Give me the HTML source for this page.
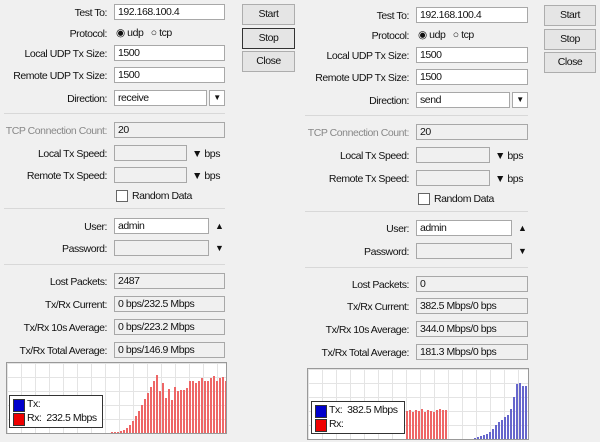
<!DOCTYPE html>
<html><head><meta charset="utf-8"><style>
body{margin:0;width:600px;height:442px;background:#f0f0f0;position:relative;overflow:hidden;font-family:"Liberation Sans",sans-serif;font-size:10.5px;letter-spacing:-0.45px;color:#111}
.a{position:absolute}
.l{position:absolute;text-align:right;white-space:nowrap;line-height:14px}
.f{position:absolute;height:16px;border:1px solid #a8a8a8;background:#fff;box-sizing:border-box;padding-left:3px;line-height:14px;white-space:nowrap}
.ro{background:#f0f0f0}
.btn{position:absolute;border:1px solid #adadad;background:#e5e5e5;box-sizing:border-box;text-align:center;line-height:19px}
.sep{position:absolute;height:1px;background:#d8d8d8}
.g{position:absolute;background:#fff;border:1px solid #999;overflow:hidden;box-sizing:border-box}
.dd{position:absolute;width:16px;height:16px;border:1px solid #a8a8a8;box-sizing:border-box;background:#fff;text-align:center;font-size:8px;line-height:14px}
</style></head><body>
<div id="root"></div>
<script>
var h='';
function L(x,y,t,c){h+='<div class="l" style="right:'+(600-x)+'px;top:'+(y-6)+'px;'+(c?'color:'+c:'')+'">'+t+'</div>';}
function F(x,y,w,t,ro){h+='<div class="f'+(ro?' ro':'')+'" style="left:'+x+'px;top:'+(y-8)+'px;width:'+w+'px">'+(t||'')+'</div>';}
function T(x,y,t,s){h+='<div class="a" style="left:'+x+'px;top:'+(y-7)+'px;line-height:14px;'+(s||'')+'">'+t+'</div>';}
function panel(o,rows,lx,ix,iw,vals,dir,btn){
 var r=rows;
 L(lx,r[0],'Test To:');F(ix,r[0],iw,'192.168.100.4');
 L(lx,r[1],'Protocol:');T(ix+2,r[1],'&#9673; udp &nbsp; &#9675; tcp');
 L(lx,r[2],'Local UDP Tx Size:');F(ix,r[2],iw,'1500');
 L(lx,r[3],'Remote UDP Tx Size:');F(ix,r[3],iw,'1500');
 L(lx,r[4],'Direction:');F(ix,r[4],iw-18,dir);h+='<div class="dd" style="left:'+(ix+iw-16)+'px;top:'+(r[4]-8)+'px">&#9660;</div>';
 h+='<div class="sep" style="left:'+(o+4)+'px;width:'+(ix+iw-o-4)+'px;top:'+(r[4]+15)+'px"></div>';
 L(lx,r[5],'TCP Connection Count:','#888');F(ix,r[5],iw,'20',1);
 L(lx,r[6],'Local Tx Speed:');F(ix,r[6],iw-38,'',1);T(ix+iw-33,r[6]+1,'&#9660; bps');
 L(lx,r[7],'Remote Tx Speed:');F(ix,r[7],iw-38,'',1);T(ix+iw-33,r[7]+1,'&#9660; bps');
 h+='<div class="a" style="left:'+(ix+2)+'px;top:'+(r[8]-6)+'px;width:10px;height:10px;border:1px solid #666;background:#fff"></div>';T(ix+18,r[8],'Random Data');
 h+='<div class="sep" style="left:'+(o+4)+'px;width:'+(ix+iw-o-4)+'px;top:'+(r[8]+12)+'px"></div>';
 L(lx,r[9],'User:');F(ix,r[9],iw-16,'admin');T(ix+iw-10,r[9],'&#9650;','font-size:9px');
 L(lx,r[10],'Password:');F(ix,r[10],iw-16,'',1);T(ix+iw-10,r[10],'&#9660;','font-size:9px');
 h+='<div class="sep" style="left:'+(o+4)+'px;width:'+(ix+iw-o-4)+'px;top:'+(r[10]+16)+'px"></div>';
 L(lx,r[11],'Lost Packets:');F(ix,r[11],iw,vals[0],1);
 L(lx,r[12],'Tx/Rx Current:');F(ix,r[12],iw,vals[1],1);
 L(lx,r[13],'Tx/Rx 10s Average:');F(ix,r[13],iw,vals[2],1);
 L(lx,r[14],'Tx/Rx Total Average:');F(ix,r[14],iw,vals[3],1);
 var b=btn;['Start','Stop','Close'].forEach(function(t,i){h+='<div class="btn" style="left:'+b[0]+'px;top:'+b[1][i]+'px;width:'+b[2]+'px;height:21px;'+(i==1&&o==0?'border:1px solid #333':'')+'">'+t+'</div>';});
}
panel(0,[12,33,53,75,98,130,153,175,196,226,248,281,304,327,350],107,114,111,['2487','0 bps/232.5 Mbps','0 bps/223.2 Mbps','0 bps/146.9 Mbps'],'receive',[242,[4,28,51],53]);
panel(301,[15,35,55,77,100,132,155,178,199,228,251,284,306,329,352],409,416,112,['0','382.5 Mbps/0 bps','344.0 Mbps/0 bps','181.3 Mbps/0 bps'],'send',[544,[5,29,52],52]);
function graph(x,y,w,hh,bars,legend){
 var s='<div class="g" style="left:'+x+'px;top:'+y+'px;width:'+w+'px;height:'+hh+'px;background-color:#fff;background-image:linear-gradient(#e4e4e4 1px,transparent 1px),linear-gradient(90deg,#e4e4e4 1px,transparent 1px);background-size:14px 14px">';
 bars.forEach(function(b){s+='<div class="a" style="left:'+b[0]+'px;bottom:0;width:2px;height:'+b[1]+'px;background:'+b[2]+'"></div>';});
 s+='<div class="a" style="left:'+legend[0]+'px;top:'+legend[1]+'px;width:92px;height:31px;border:1px solid #333;background:#fff;font-size:10.5px">'+
 '<div class="a" style="left:3px;top:3px;width:10px;height:11px;background:#00c;border:1px solid #333"></div><div class="a" style="left:17px;top:2px">'+legend[2]+'</div>'+
 '<div class="a" style="left:3px;top:17px;width:10px;height:11px;background:#e00;border:1px solid #333"></div><div class="a" style="left:17px;top:16px">'+legend[3]+'</div></div>';
 h+=s+'</div>';
}
var b1=[],hs=[1,1,1,2,3,5,8,12,17,22,28,34,40,46,52,58,42,50,35,44,33,46,42,43,43,45,52,52,50,52,55,52,52,55,57,52,55,56,52,57,55];
for(var i=0;i<hs.length;i++)b1.push([104+i*3,hs[i],'#e66']);
graph(6,362,221,72,b1,[2,32,'Tx:','Rx:&nbsp; 232.5 Mbps']);
var b2=[];for(var i=0;i<14;i++)b2.push([98+i*3,[28,29,27,29,28,30,27,29,28,27,29,30,29,29][i],'#e66']);
var bh=[1,2,3,4,5,7,10,14,17,19,22,24,30,42,55,56,53,53,55,57,53];for(var i=0;i<bh.length;i++)b2.push([166+i*3,bh[i],'#66c']);
graph(307,368,222,72,b2,[3,32,'Tx:&nbsp; 382.5 Mbps','Rx:']);
document.getElementById('root').innerHTML=h;
</script>
</body></html>
